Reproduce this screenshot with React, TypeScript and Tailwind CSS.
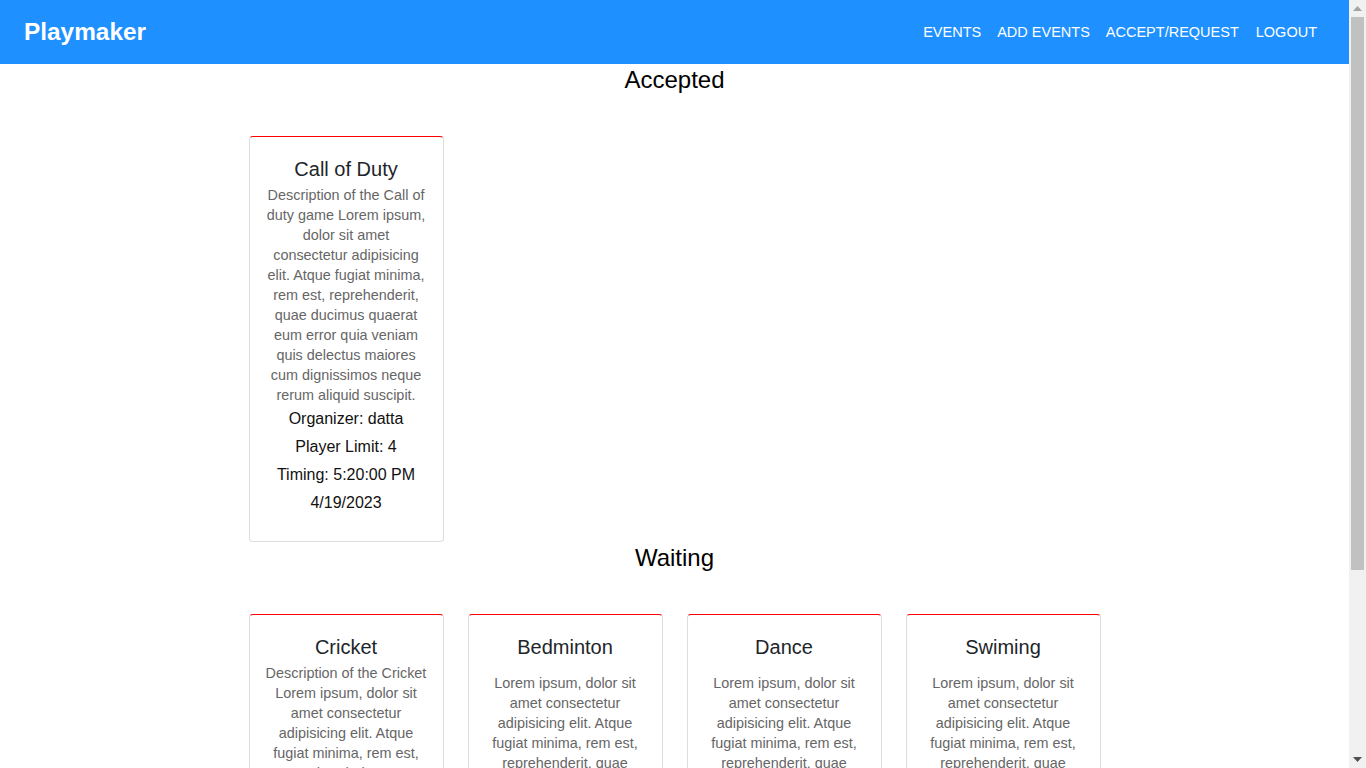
import React from "react";

type Ev = {
  title: string;
  desc: string;
  descGap?: boolean;
  organizer: string;
  limit: number;
  time: string;
  date: string;
};

const tail =
  "Lorem ipsum, dolor sit amet consectetur adipisicing elit. Atque fugiat minima, rem est, reprehenderit, quae ducimus quaerat eum error quia veniam quis delectus maiores cum dignissimos neque rerum aliquid suscipit.";

const accepted: Ev[] = [
  {
    title: "Call of Duty",
    desc: "Description of the Call of duty game " + tail,
    organizer: "datta",
    limit: 4,
    time: "5:20:00 PM",
    date: "4/19/2023",
  },
];

const waiting: Ev[] = [
  {
    title: "Cricket",
    desc: "Description of the Cricket " + tail,
    organizer: "datta",
    limit: 11,
    time: "6:30:00 PM",
    date: "4/20/2023",
  },
  {
    title: "Bedminton",
    desc: tail,
    descGap: true,
    organizer: "datta",
    limit: 2,
    time: "7:00:00 AM",
    date: "4/21/2023",
  },
  {
    title: "Dance",
    desc: tail,
    descGap: true,
    organizer: "datta",
    limit: 10,
    time: "6:00:00 PM",
    date: "4/22/2023",
  },
  {
    title: "Swiming",
    desc: tail,
    descGap: true,
    organizer: "datta",
    limit: 6,
    time: "8:00:00 AM",
    date: "4/23/2023",
  },
];

function Card({ ev }: { ev: Ev }) {
  return (
    <div className="flex flex-col items-center rounded-[4px] border border-[#dddddd] border-t-[#ff0000] px-4 pt-[17px] pb-[24px] text-center">
      <div className="text-[20px] leading-[30px] text-[#212529]">{ev.title}</div>
      <p
        className={`${ev.descGap ? "mt-[11px]" : "mt-[1px]"} text-[14.4px] leading-[20px] text-[#666666]`}
      >
        {ev.desc}
      </p>
      <div className="text-[16px] leading-[28px] text-[#111111]">
        <div>Organizer: {ev.organizer}</div>
        <div>Player Limit: {ev.limit}</div>
        <div>Timing: {ev.time}</div>
        <div>{ev.date}</div>
      </div>
    </div>
  );
}

function Section({ title, items }: { title: string; items: Ev[] }) {
  return (
    <section className="flex flex-col items-center">
      <h2 className="text-[24px] leading-[32px] text-black">{title}</h2>
      <div className="mt-10 grid w-[852px] grid-cols-4 gap-6">
        {items.map((ev) => (
          <Card key={ev.title} ev={ev} />
        ))}
      </div>
    </section>
  );
}

function FakeScrollbar() {
  return (
    <div className="flex h-screen w-[17px] shrink-0 flex-col bg-[#f1f1f1]">
      <div className="flex h-[17px] items-center justify-center">
        <svg width="9" height="5" viewBox="0 0 9 5">
          <polygon points="0,5 9,5 4.5,0" fill="#a3a3a3" />
        </svg>
      </div>
      <div className="flex flex-1 flex-col px-[2px]">
        <div className="h-[553px] bg-[#c1c1c1]" />
      </div>
      <div className="flex h-[17px] items-center justify-center">
        <svg width="9" height="5" viewBox="0 0 9 5">
          <polygon points="0,0 9,0 4.5,5" fill="#505050" />
        </svg>
      </div>
    </div>
  );
}

export default function App() {
  return (
    <div
      className="flex h-screen overflow-hidden bg-white"
      style={{ fontFamily: '"Liberation Sans", Arial, sans-serif' }}
    >
      <div className="h-screen min-w-0 flex-1 overflow-hidden">
        <nav className="flex h-16 items-center justify-between bg-[#1e90ff] pl-6 pr-8">
          <div className="text-[24.4px] font-bold text-white">Playmaker</div>
          <div className="mt-[2px] flex items-center gap-4 text-[14.5px] text-white">
            <a href="#" className="uppercase">EVENTS</a>
            <a href="#" className="uppercase">ADD EVENTS</a>
            <a href="#" className="uppercase">ACCEPT/REQUEST</a>
            <a href="#" className="ml-px uppercase">LOGOUT</a>
          </div>
        </nav>
        <Section title="Accepted" items={accepted} />
        <Section title="Waiting" items={waiting} />
      </div>
      <FakeScrollbar />
    </div>
  );
}
